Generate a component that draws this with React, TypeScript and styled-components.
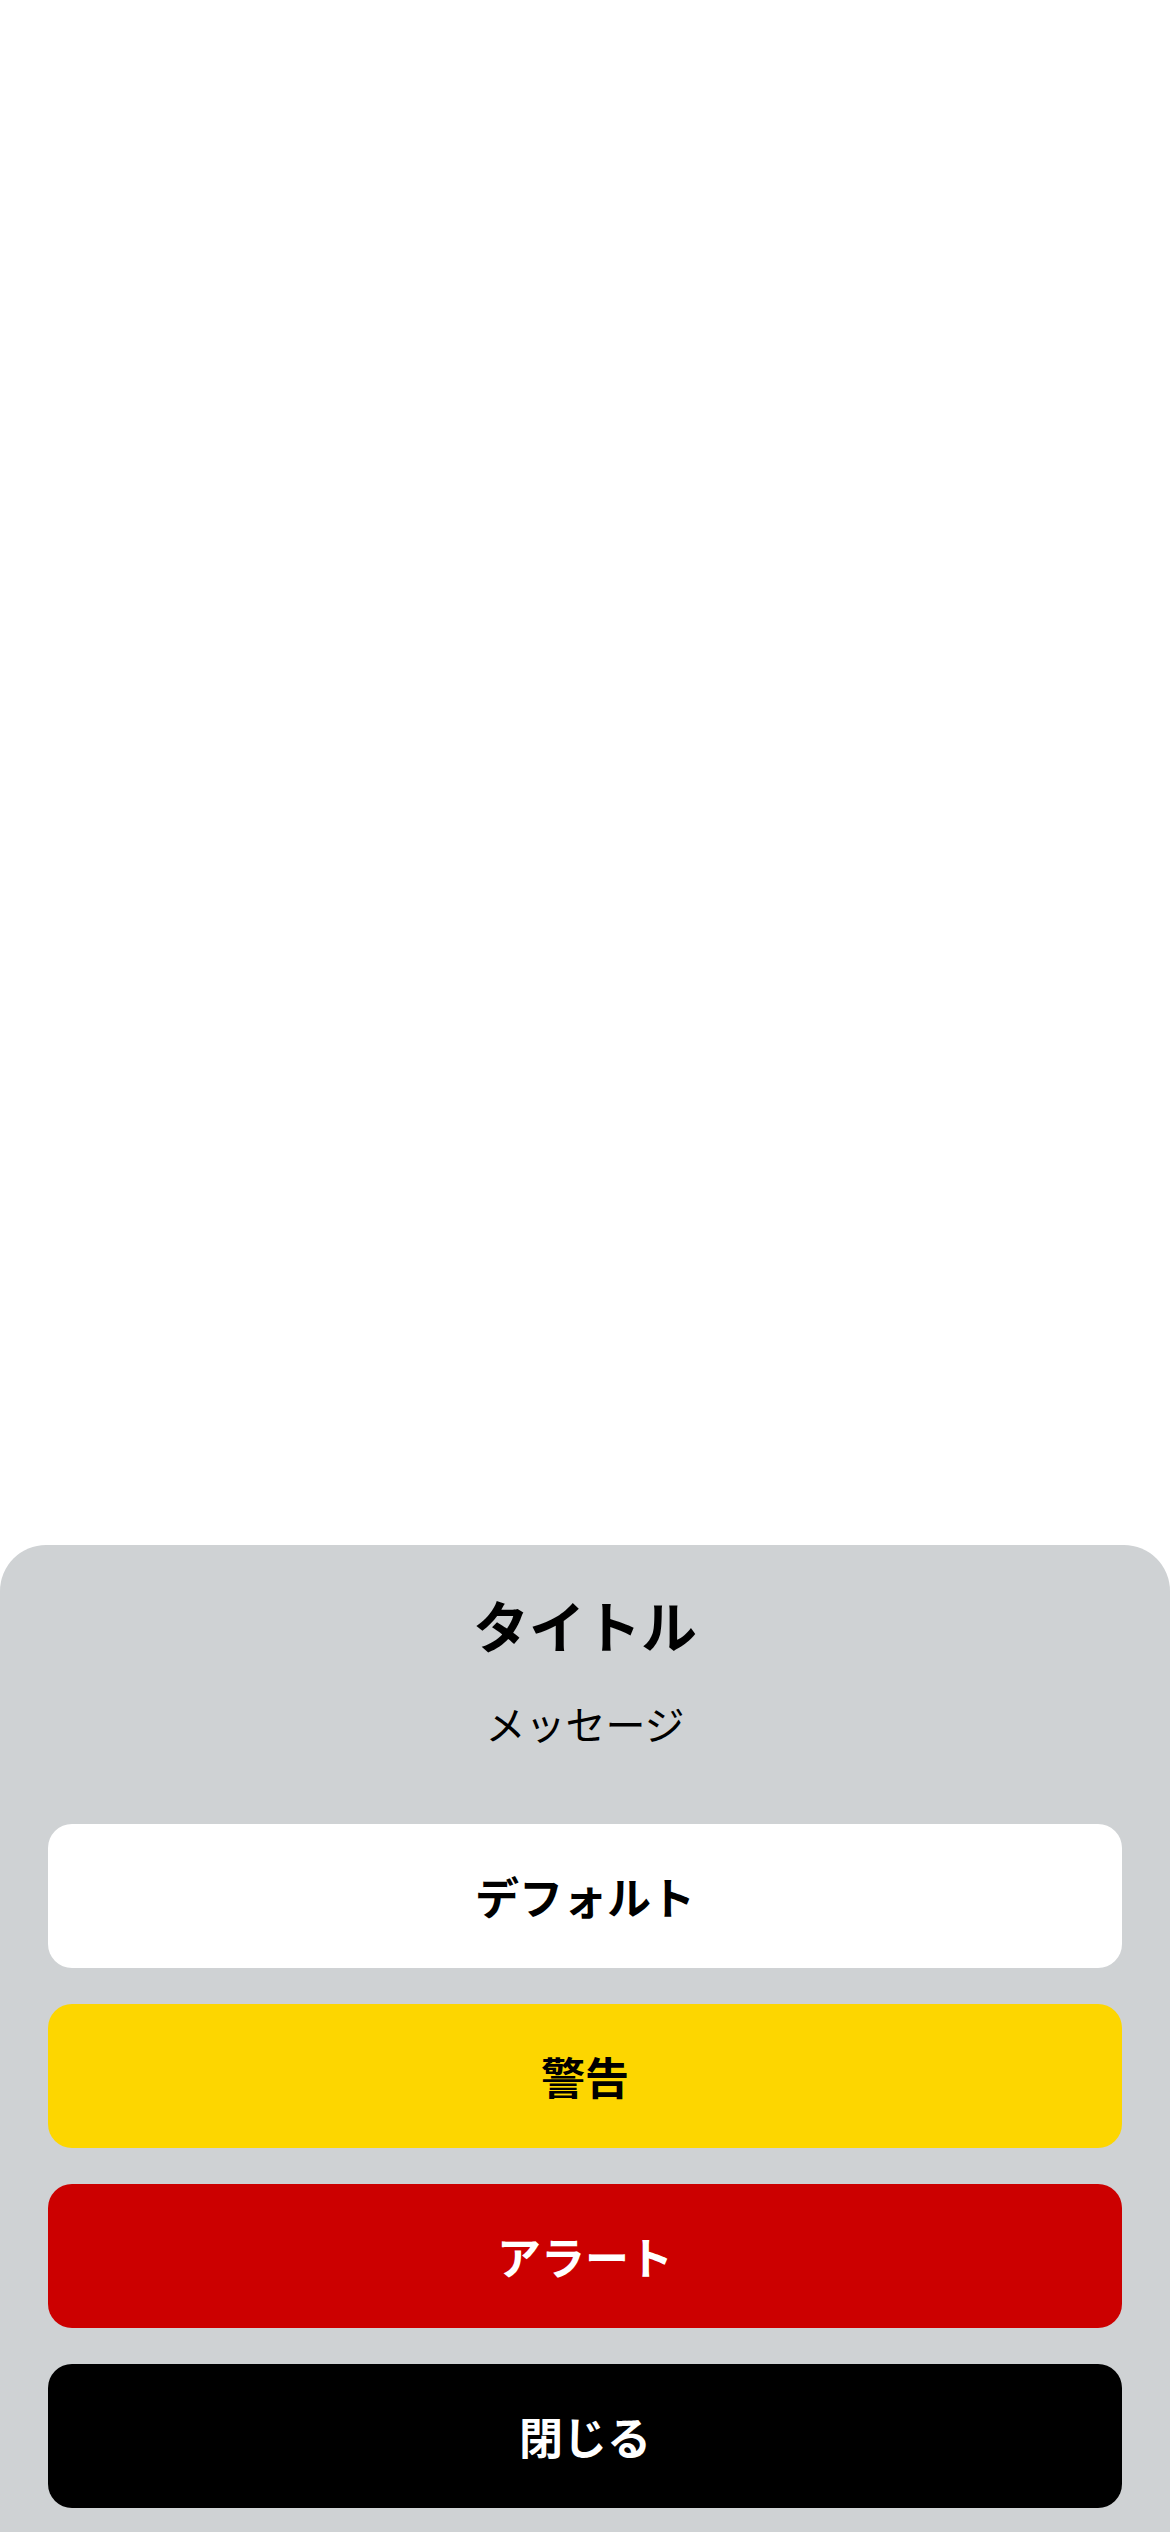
import React from "react";
import styled, { createGlobalStyle } from "styled-components";

const Global = createGlobalStyle`
  html, body { margin: 0; padding: 0; background: #ffffff; }
  body { font-family: "Noto Sans CJK JP", "Noto Sans", sans-serif; }
  * { box-sizing: border-box; }
`;

const Page = styled.div`
  min-height: 100vh;
  display: flex;
  flex-direction: column;
  justify-content: flex-end;
  background: #ffffff;
`;

const Sheet = styled.div`
  background: #cfd2d4;
  border-radius: 46px 46px 0 0;
  padding: 45px 48px 24px;
  display: flex;
  flex-direction: column;
`;

const Title = styled.h1`
  margin: 0;
  text-align: center;
  font-size: 56px;
  line-height: 1.2;
  font-weight: 700;
  color: #000;
`;

const Message = styled.p`
  margin: 42px 0 0;
  text-align: center;
  font-size: 40px;
  line-height: 1.2;
  font-weight: 400;
  color: #000;
`;

const Actions = styled.div`
  margin-top: 77px;
  display: flex;
  flex-direction: column;
  gap: 36px;
`;

type Variant = "default" | "warning" | "alert" | "close";

const palette: Record<Variant, { bg: string; fg: string }> = {
  default: { bg: "#ffffff", fg: "#000000" },
  warning: { bg: "#fdd600", fg: "#000000" },
  alert: { bg: "#cc0000", fg: "#ffffff" },
  close: { bg: "#000000", fg: "#ffffff" },
};

const ActionButton = styled.button<{ $variant: Variant }>`
  height: 144px;
  width: 100%;
  border: none;
  border-radius: 24px;
  background: ${(p) => palette[p.$variant].bg};
  color: ${(p) => palette[p.$variant].fg};
  font-family: "Noto Sans CJK JP", "Noto Sans", sans-serif;
  font-size: 44px;
  font-weight: 700;
  display: flex;
  align-items: center;
  justify-content: center;
  cursor: pointer;
`;

const actions: { label: string; variant: Variant }[] = [
  { label: "デフォルト", variant: "default" },
  { label: "警告", variant: "warning" },
  { label: "アラート", variant: "alert" },
  { label: "閉じる", variant: "close" },
];

export default function App() {
  return (
    <>
      <Global />
      <Page>
        <Sheet>
          <Title>タイトル</Title>
          <Message>メッセージ</Message>
          <Actions>
            {actions.map((a) => (
              <ActionButton key={a.label} $variant={a.variant}>
                {a.label}
              </ActionButton>
            ))}
          </Actions>
        </Sheet>
      </Page>
    </>
  );
}
